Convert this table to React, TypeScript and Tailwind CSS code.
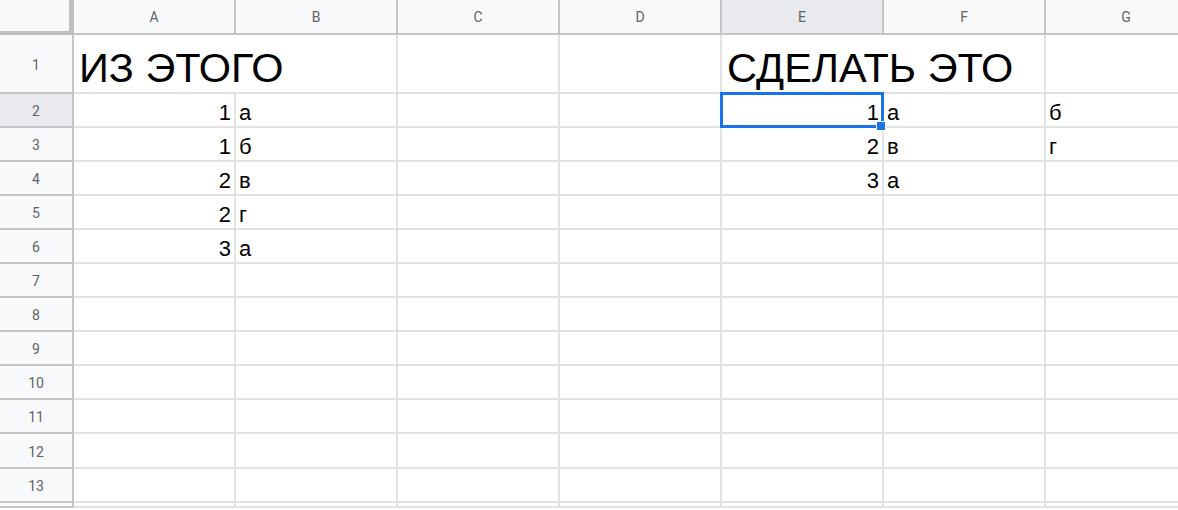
import React from "react";

const COLS = ["A", "B", "C", "D", "E", "F", "G"];
const ROWS = Array.from({ length: 14 }, (_, i) => i + 1);

type Cell = { v: string; num?: boolean; big?: boolean; span?: number };

const DATA: Record<number, Record<number, Cell>> = {
  1: { 0: { v: "ИЗ ЭТОГО", big: true, span: 2 }, 4: { v: "СДЕЛАТЬ ЭТО", big: true, span: 2 } },
  2: { 0: { v: "1", num: true }, 1: { v: "а" }, 4: { v: "1", num: true }, 5: { v: "а" }, 6: { v: "б" } },
  3: { 0: { v: "1", num: true }, 1: { v: "б" }, 4: { v: "2", num: true }, 5: { v: "в" }, 6: { v: "г" } },
  4: { 0: { v: "2", num: true }, 1: { v: "в" }, 4: { v: "3", num: true }, 5: { v: "а" } },
  5: { 0: { v: "2", num: true }, 1: { v: "г" } },
  6: { 0: { v: "3", num: true }, 1: { v: "а" } },
};

export default function App() {
  const cells: React.ReactNode[] = [];

  cells.push(
    <div
      key="corner"
      className="bg-[#f8f9fa] border-r-[5px] border-b-4 border-[#c0c0c0]"
    />
  );
  COLS.forEach((c, i) => {
    cells.push(
      <div
        key={"h" + c}
        className={
          "flex items-center justify-center pt-[1px] border-r-2 border-b-2 border-[#c4c4c4] text-[14px] text-[#5f6368] " +
          (i === 4 ? "bg-[#e8eaed]" : "bg-[#f8f9fa]")
        }
        style={{ fontFamily: "Roboto, 'Liberation Sans', sans-serif" }}
      >
        {c}
      </div>
    );
  });

  ROWS.forEach((r) => {
    cells.push(
      <div
        key={"r" + r}
        className={
          "flex items-center justify-center pt-[3px] border-r-2 border-b-2 border-[#c4c4c4] text-[14px] text-[#5f6368] " +
          (r === 2 ? "bg-[#e8eaed]" : "bg-[#f8f9fa]")
        }
        style={{ fontFamily: "Roboto, 'Liberation Sans', sans-serif" }}
      >
        {r < 14 ? r : ""}
      </div>
    );
    const rowData = DATA[r] || {};
    for (let ci = 0; ci < COLS.length; ci++) {
      const cell = rowData[ci];
      const span = cell?.span ?? 1;
      const selected = r === 2 && ci === 4;
      cells.push(
        <div
          key={`c${r}-${ci}`}
          className={
            "relative flex items-end border-r-2 border-b-2 border-[#e2e2e2] text-black whitespace-nowrap " +
            (span === 2 ? "col-span-2 " : "") +
            (cell?.num ? "justify-end " : "justify-start ") +
            (cell?.big
              ? "text-[41.5px] leading-[48px] pl-[5px] "
              : "text-[22px] leading-[25px] pb-[1px] px-[3px] ")
          }
          style={{ fontFamily: "'Liberation Sans', Arial, sans-serif" }}
        >
          {cell?.v}
          {selected && (
            <>
              <div className="absolute left-[-2px] top-[-2px] w-[164px] h-[36px] border-[3px] border-[#1a73e8] z-10 pointer-events-none" />
              <div className="absolute left-[154px] top-[27px] w-[10px] h-[10px] bg-[#1a73e8] border border-white z-20" />
            </>
          )}
        </div>
      );
      if (span === 2) ci++;
    }
  });

  return (
    <div className="w-[1178px] h-[510px] overflow-hidden bg-white">
      <div className="grid grid-cols-[74px_repeat(7,162px)] grid-rows-[35px_59px_34px_34px_34px_34px_34px_34px_34px_34px_34px_34px_35px_34px] w-max">
        {cells}
      </div>
    </div>
  );
}
